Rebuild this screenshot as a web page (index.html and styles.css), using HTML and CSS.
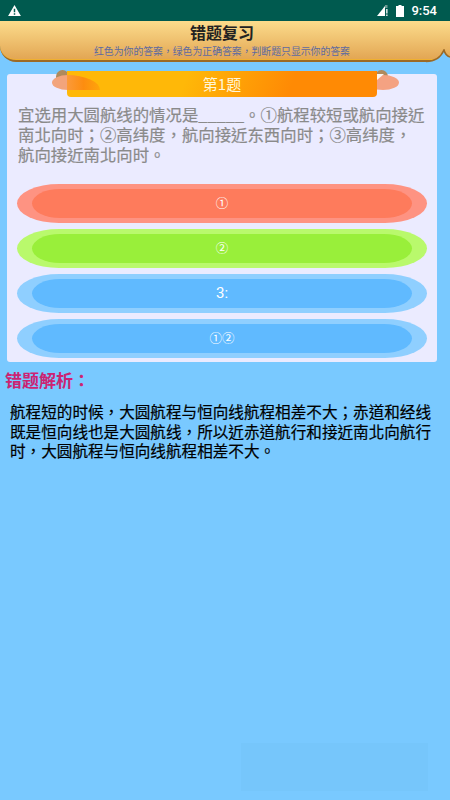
FILE: index.html
```html
<!DOCTYPE html>
<html lang="zh-Hant">
<head>
<meta charset="utf-8">
<title>错题复习</title>
<link rel="stylesheet" href="styles.css">
</head>
<body>
<div class="status">
  <svg class="warn" viewBox="0 0 14 12" width="13" height="11"><path fill-rule="evenodd" fill="#fff" d="M7 0 L14 12 H0 Z M6.2 4 V8 H7.8 V4 Z M6.2 9 V10.5 H7.8 V9 Z"/></svg>
  <div class="status-right">
    <svg viewBox="0 0 11 11" width="11" height="11"><path fill="#fff" d="M8 1 V11 H0 Z"/><path fill="#6f9c95" d="M8 0 L10.5 0 V3 H8 Z"/><rect x="9.2" y="4" width="1.3" height="4.5" fill="#fff"/><rect x="9.2" y="9.5" width="1.3" height="1.5" fill="#fff"/></svg>
    <svg viewBox="0 0 8 12" width="8" height="12"><path fill="#fff" d="M2.5 0 H5.5 V1 H8 V12 H0 V1 H2.5 Z"/></svg>
    <span class="time">9:54</span>
  </div>
</div>
<header class="head">
  <h1>错题复习</h1>
  <p>红色为你的答案，绿色为正确答案，判断题只显示你的答案</p>
  <svg class="notch" viewBox="0 0 24 14" width="24" height="14"><path fill="#79c9ff" d="M0 14 V12.5 C10 12.5 15 8 18 1 C19 5 21 7 24 8 V14 Z"/><path fill="none" stroke="#9c6a26" stroke-width="1.6" d="M0 12.5 C10 12.5 15 8 18 1 C19 5 21 7 24 8"/></svg>
</header>
<main class="card">
  <div class="ribbon">
    <span class="nub nub-l"></span>
    <span class="nub nub-r"></span>
    <span class="ear ear-l"></span>
    <span class="ear ear-r"></span>
    <span class="fold"></span>
    <span class="tip"></span>
    <span class="ribbon-text">第1题</span>
  </div>
  <div class="question">宜选用大圆航线的情况是_____。①航程较短或航向接近南北向时；②高纬度，航向接近东西向时；③高纬度，航向接近南北向时。</div>
  <div class="options">
    <div class="opt opt-red"><div class="inner inner-sym">①</div></div>
    <div class="opt opt-green"><div class="inner inner-sym">②</div></div>
    <div class="opt opt-blue"><div class="inner">3:</div></div>
    <div class="opt opt-blue"><div class="inner inner-sym">①②</div></div>
  </div>
</main>
<h2 class="analysis-title">错题解析：</h2>
<p class="analysis">航程短的时候，大圆航程与恒向线航程相差不大；赤道和经线既是恒向线也是大圆航线，所以近赤道航行和接近南北向航行时，大圆航程与恒向线航程相差不大。</p>
<div class="ghost"></div>
</body>
</html>
```
FILE: styles.css
```css
* { box-sizing: border-box; }
html, body { margin: 0; padding: 0; }
body {
  position: relative;
  width: 450px;
  height: 800px;
  overflow: hidden;
  background: #79c9ff;
  font-family: "Noto Sans CJK TC", "Roboto", sans-serif;
}
.status {
  height: 21px;
  background: #005a4f;
  display: flex;
  align-items: center;
  justify-content: space-between;
  padding: 0 13px 0 8px;
}
.status-right { display: flex; align-items: center; gap: 8px; }
.time { font: 500 13px "Roboto", sans-serif; color: #fff; margin-left: -1px; }
.head {
  position: relative;
  height: 41px;
  padding-right: 6px;
  text-align: center;
  background: linear-gradient(#fcdc8c, #e2a552);
  border-bottom: 2px solid #9c6a26;
  border-radius: 0 0 0 16px;
  box-shadow: inset 0 -1px 0 #f0b030;
}
.head h1 {
  margin: 0;
  height: 23px;
  font-size: 16px;
  line-height: 22px;
  font-weight: 700;
  color: #222;
}
.head p {
  margin: 0;
  font-size: 9.85px;
  line-height: 14px;
  color: #5d6aa0;
  white-space: nowrap;
}
.notch { position: absolute; right: 0; bottom: -3px; }
.card {
  isolation: isolate;
  margin: 12px 13px 0 7px;
  height: 288px;
  background: #ebebff;
  border-radius: 3px;
  padding: 0 10px;
}
.ribbon {
  position: relative;
  top: -3px;
  margin-left: 50px;
  height: 26px;
  width: 310px;
  border-radius: 0 0 4px 4px;
  background: linear-gradient(110deg, #ffb808 38%, #ff8a04 72%);
  text-align: center;
}
.ribbon-text { position: relative; color: #fff6d8; font-size: 15px; line-height: 25px; }
.nub { position: absolute; top: -1px; width: 13px; height: 8px; border-radius: 7px 7px 0 0; background: #b08a5c; z-index: -1; }
.nub-l { left: -11px; }
.nub-r { right: -11px; }
.ear { position: absolute; top: 4px; width: 32px; height: 15px; border-radius: 50%; background: #f2a47c; z-index: -1; }
.ear-l { left: -15px; }
.ear-r { right: -22px; background: #f4a282; }
.fold {
  position: absolute;
  left: 0;
  top: 4px;
  width: 33px;
  height: 15px;
  border-radius: 0 100% 0 0;
  background: linear-gradient(90deg, #fb9a3a, #fd8d10 50%, #ffa50a);
}
.tip {
  position: absolute;
  right: -7px;
  top: 3px;
  width: 7px;
  height: 6px;
  background: #fdf7f2;
  clip-path: polygon(0 0, 100% 0, 0 100%);
}
.question {
  margin-top: 4px;
  height: 60px;
  padding-left: 1px;
  font-size: 16.4px;
  line-height: 20px;
  color: #8a8a8a;
  -webkit-text-stroke: 0.2px #8a8a8a;
  word-break: break-all;
}
.options { margin-top: 20px; display: flex; flex-direction: column; gap: 6px; }
.opt {
  height: 39px;
  border-radius: 42px / 19.5px;
  padding: 5px 15px;
}
.inner {
  height: 29px;
  border-radius: 28px / 14.5px;
  text-align: center;
  color: #fff;
  font-size: 15px;
  line-height: 29px;
  font-family: "Roboto", "Noto Sans CJK TC", sans-serif;
}
.inner-sym { font-size: 12.5px; }
.opt-red { background: #fe9382; }
.opt-red .inner { background: #fe7b5c; }
.opt-green { background: #b9f96c; }
.opt-green .inner { background: #99ef3a; }
.opt-blue { background: #8fcfff; }
.opt-blue .inner { background: #60baff; }
.analysis-title {
  margin: 6px 0 0 5px;
  font-size: 17px;
  line-height: 23px;
  font-weight: 700;
  color: #cc2372;
}
.analysis {
  margin: 11px 13px 0 10px;
  font-size: 15.6px;
  line-height: 19.5px;
  color: #000;
  -webkit-text-stroke: 0.2px #000;
  word-break: break-all;
}
.ghost {
  position: absolute;
  left: 241px;
  top: 743px;
  width: 187px;
  height: 48px;
  background: rgba(110, 190, 240, 0.25);
}
```
